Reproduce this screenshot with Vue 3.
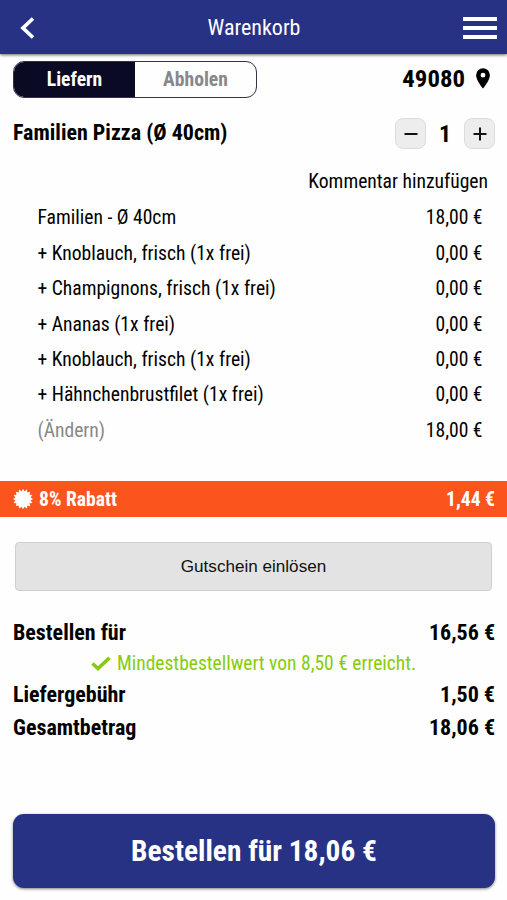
<script setup>
import { ref } from "vue";

const mode = ref("liefern");

const positions = [
  { name: "Familien - Ø 40cm", price: "18,00 €" },
  { name: "+ Knoblauch, frisch (1x frei)", price: "0,00 €" },
  { name: "+ Champignons, frisch (1x frei)", price: "0,00 €" },
  { name: "+ Ananas (1x frei)", price: "0,00 €" },
  { name: "+ Knoblauch, frisch (1x frei)", price: "0,00 €" },
  { name: "+ Hähnchenbrustfilet (1x frei)", price: "0,00 €" },
  { name: "(Ändern)", price: "18,00 €", muted: true },
];

// seal with 16 teeth
const seal = Array.from({ length: 32 }, (_, i) => {
  const r = i % 2 ? 7.8 : 10.2;
  const a = (i * Math.PI) / 16;
  return `${(10 + r * Math.sin(a)).toFixed(2)},${(10 - r * Math.cos(a)).toFixed(2)}`;
}).join(" ");
</script>

<template>
  <div class="page">
    <header class="header">
      <svg class="header__back" width="15" height="22" viewBox="0 0 15 22">
        <path d="M13 1.5 L3 11 L13 20.5" fill="none" stroke="#fff" stroke-width="3.7" />
      </svg>
      <h1 class="header__title">Warenkorb</h1>
      <div class="header__menu"><i></i><i></i><i></i></div>
    </header>

    <div class="top">
      <div class="toggle">
        <div class="toggle__item" :class="{ active: mode === 'liefern' }" @click="mode = 'liefern'">
          Liefern
        </div>
        <div class="toggle__item" :class="{ active: mode === 'abholen' }" @click="mode = 'abholen'">
          Abholen
        </div>
      </div>
      <div class="zip">
        <span>49080</span>
        <svg width="14" height="21" viewBox="0 0 14 21">
          <path
            fill="#000"
            fill-rule="evenodd"
            d="M7 0.3a6.9 6.9 0 0 0-6.9 6.9C0.1 12.3 7 20.5 7 20.5S13.9 12.3 13.9 7.2A6.9 6.9 0 0 0 7 0.3zM7 4.8a2.4 2.4 0 1 1 0 4.8a2.4 2.4 0 0 1 0-4.8z"
          />
        </svg>
      </div>
    </div>

    <div class="product">
      <h2 class="product__name">Familien Pizza (Ø 40cm)</h2>
      <div class="stepper">
        <button type="button" class="stepper__btn" aria-label="weniger">
          <svg width="14" height="14" viewBox="0 0 14 14">
            <path d="M0.5 7H13.5" stroke="#111" stroke-width="2" />
          </svg>
        </button>
        <span class="stepper__count">1</span>
        <button type="button" class="stepper__btn" aria-label="mehr">
          <svg width="14" height="14" viewBox="0 0 14 14">
            <path d="M0.5 7H13.5M7 0.5V13.5" stroke="#111" stroke-width="2" />
          </svg>
        </button>
      </div>
    </div>

    <div class="comment"><span>Kommentar hinzufügen</span></div>

    <ul class="list">
      <li v-for="(p, i) in positions" :key="i" class="list__row">
        <span :class="{ muted: p.muted }">{{ p.name }}</span>
        <span>{{ p.price }}</span>
      </li>
    </ul>

    <div class="rabatt">
      <svg width="20" height="20" viewBox="0 0 20 20">
        <polygon :points="seal" fill="#fff" />
      </svg>
      <span class="rabatt__label">8% Rabatt</span>
      <span class="rabatt__value">1,44 €</span>
    </div>

    <button type="button" class="coupon">Gutschein einlösen</button>

    <div class="sums">
      <div class="sums__row"><span>Bestellen für</span><span>16,56 €</span></div>
      <div class="sums__info">
        <svg width="20" height="15" viewBox="0 0 20 15">
          <path d="M1.5 7.5 L7 12.5 L18.5 1.8" fill="none" stroke="#86cc0c" stroke-width="3.6" />
        </svg>
        <span>Mindestbestellwert von 8,50 € erreicht.</span>
      </div>
      <div class="sums__row"><span>Liefergebühr</span><span>1,50 €</span></div>
      <div class="sums__row"><span>Gesamtbetrag</span><span>18,06 €</span></div>
    </div>

    <button type="button" class="order"><span>Bestellen für 18,06 €</span></button>
  </div>
</template>

<style>
body {
  margin: 0;
  background: #fefefe;
}
</style>

<style scoped>
.page {
  box-sizing: border-box;
  width: 507px;
  height: 900px;
  overflow: hidden;
  color: #000;
  font-family: "Roboto Condensed", Roboto, sans-serif;
  font-stretch: 75%;
  font-size: 19.6px;
}

.header {
  display: flex;
  align-items: center;
  justify-content: space-between;
  box-sizing: border-box;
  height: 54px;
  padding: 2px 10px 0 20px;
  background: #273284;
  box-shadow: 0 1px 3px rgba(0, 0, 0, 0.6);
}

.header__title {
  margin: 0 0 1px 10px;
  color: #fff;
  font-size: 22px;
  font-weight: 400;
}

.header__menu {
  display: flex;
  flex-direction: column;
  gap: 5px;
  width: 34px;
}

.header__menu i {
  height: 4px;
  background: #fff;
}

.top {
  display: flex;
  align-items: center;
  justify-content: space-between;
  padding: 7px 17px 0 13px;
}

.toggle {
  display: flex;
  box-sizing: border-box;
  width: 244px;
  height: 37px;
  border: 1px solid #33334a;
  border-radius: 11px;
  overflow: hidden;
}

.toggle__item {
  flex: 1;
  color: #88888a;
  font-weight: 700;
  line-height: 35px;
  text-align: center;
}

.toggle__item.active {
  background: #0a0a24;
  color: #fff;
}

.zip {
  display: flex;
  align-items: center;
  gap: 11px;
  height: 35px;
  margin-bottom: 2px;
  font-size: 24.8px;
  font-weight: 700;
}

.product {
  display: flex;
  align-items: center;
  justify-content: space-between;
  height: 31px;
  margin-top: 20px;
  padding: 0 12px 0 13px;
}

.product__name {
  margin: 0 0 2px;
  font-size: 22px;
  font-weight: 700;
}

.stepper {
  display: flex;
  align-items: center;
}

.stepper__btn {
  display: flex;
  align-items: center;
  justify-content: center;
  width: 31px;
  height: 31px;
  padding: 0;
  border: 1px solid #dcdcdc;
  border-radius: 8px;
  background: #ededed;
}

.stepper__count {
  width: 38px;
  font-size: 24px;
  font-weight: 700;
  text-align: center;
}

.comment {
  display: flex;
  justify-content: flex-end;
  margin-top: 15px;
  padding-right: 19px;
  line-height: 36px;
}

.list {
  margin: 0.4px 0 0;
  padding: 0 24.5px 0 37.5px;
  list-style: none;
}

.list__row {
  display: flex;
  justify-content: space-between;
  height: 35.4px;
  line-height: 35.4px;
}

.muted {
  color: #888;
}

.rabatt {
  display: flex;
  align-items: center;
  height: 36px;
  margin-top: 33px;
  padding: 0 12px 0 13px;
  background: #fc541d;
  color: #fff;
  font-weight: 700;
}

.rabatt__label {
  margin-left: 6px;
}

.rabatt__value {
  margin-left: auto;
}

.coupon {
  display: block;
  width: 477px;
  height: 49px;
  margin: 25px 0 0 15px;
  padding: 1px 0 0;
  border: 1px solid #cfcfcf;
  border-radius: 4px;
  background: #e3e3e3;
  color: #111;
  font-family: "Liberation Sans", Arial, sans-serif;
  font-size: 17.1px;
}

.sums {
  margin-top: 25px;
  padding: 0 12px 0 13px;
}

.sums__row {
  display: flex;
  justify-content: space-between;
  font-size: 22px;
  font-weight: 700;
  line-height: 33px;
}

.sums__info {
  display: flex;
  align-items: center;
  gap: 6px;
  height: 29px;
  padding-left: 78px;
  color: #86cc0c;
  font-size: 19.5px;
}

.order {
  display: block;
  width: 482px;
  height: 74px;
  margin: 70px 0 0 13px;
  padding: 0 0 1px;
  border: none;
  border-radius: 11px;
  background: #273284;
  box-shadow: 0 1px 3px rgba(0, 0, 0, 0.5);
  color: #fff;
  font-family: inherit;
  font-size: 29.4px;
  font-stretch: inherit;
  font-weight: 700;
}
</style>
